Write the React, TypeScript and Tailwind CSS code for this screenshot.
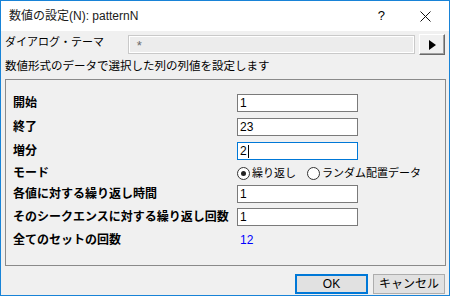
import React from 'react';

// Dialog: 数値の設定 (pattern N)
const font = "font-['Liberation_Sans','Noto_Sans_CJK_JP',sans-serif]";

function TextBox({ value, focused = false }: { value: string; focused?: boolean }) {
  return (
    <div
      className={`w-[121px] h-[18px] bg-white border flex items-center pl-[2px] text-[12px] leading-[16px] text-black ${
        focused ? 'border-[#0078d7]' : 'border-[#7a7a7a]'
      }`}
    >
      <span>{value}</span>
      {focused && <span className="w-px h-[13px] bg-black ml-[1px]" />}
    </div>
  );
}

function Radio({ label, checked }: { label: string; checked?: boolean }) {
  return (
    <div className="flex items-center gap-[2px]">
      <span className="w-[13px] h-[13px] rounded-full border border-[#333] bg-white flex items-center justify-center">
        {checked && <span className="w-[5px] h-[5px] rounded-full bg-[#222]" />}
      </span>
      <span className="text-[11px] leading-[16px] text-black">{label}</span>
    </div>
  );
}

const rows: { label: string; h: string; content: React.ReactNode }[] = [
  { label: '開始', h: 'h-[24px]', content: <TextBox value="1" /> },
  { label: '終了', h: 'h-[24px]', content: <TextBox value="23" /> },
  { label: '増分', h: 'h-[24px]', content: <TextBox value="2" focused /> },
  {
    label: 'モード',
    h: 'h-[20px]',
    content: (
      <div className="flex items-center gap-[11px]">
        <Radio label="繰り返し" checked />
        <Radio label="ランダム配置データ" />
      </div>
    ),
  },
  { label: '各値に対する繰り返し時間', h: 'h-[22px]', content: <TextBox value="1" /> },
  { label: 'そのシークエンスに対する繰り返し回数', h: 'h-[24px]', content: <TextBox value="1" /> },
  {
    label: '全てのセットの回数',
    h: 'h-[22px]',
    content: <span className="pl-[3px] text-[12px] leading-[16px] text-[#0000ff]">12</span>,
  },
];

export default function App() {
  return (
    <div className={`w-[450px] h-[296px] border border-[#1883d7] flex flex-col ${font} text-black`}>
      {/* Title bar */}
      <div className="h-[30px] bg-white flex items-center pl-[8px] shrink-0">
        <span className="text-[12px] leading-[16px] text-[#1a1a1a]">数値の設定(N): patternN</span>
        <span className="ml-auto text-[13px] leading-[16px] mr-[35px]">?</span>
        <svg width="11" height="11" viewBox="0 0 11 11" className="mr-[18px]">
          <path d="M0.5 0.5 L10.5 10.5 M10.5 0.5 L0.5 10.5" stroke="#111" strokeWidth="1" />
        </svg>
      </div>

      {/* Body */}
      <div className="flex-1 bg-[#f0f0f0] px-[4px] flex flex-col">
        <div className="flex items-start mt-[3px]">
          <span className="w-[123px] text-[11px] leading-[16px]">ダイアログ・テーマ</span>
          <div className="mt-[1px] w-[288px] h-[19px] border border-[#c9c9c9] p-px bg-white">
            <div className="h-full bg-[#ececec] pl-[7px] text-[13px] leading-[17px] text-[#6a6a6a]">*</div>
          </div>
          <div className="ml-[4px] w-[26px] h-[21px] bg-[#f0f0f0] border border-t-white border-l-white border-r-[#696969] border-b-[#696969] shadow-[inset_-1px_-1px_0_#a0a0a0] flex items-center justify-center">
            <svg width="8" height="10" viewBox="0 0 8 10">
              <path d="M1 0 L8 5 L1 10 Z" fill="#000" />
            </svg>
          </div>
        </div>

        <div className="mt-[3px] text-[11.5px] leading-[16px]">数値形式のデータで選択した列の列値を設定します</div>

        {/* Group box */}
        <div className="mt-[5px] w-[441px] h-[187px] border border-[#8a8a8a] pt-[11px] pl-[7px]">
          {rows.map((r) => (
            <div key={r.label} className={`grid grid-cols-[224px_1fr] items-center ${r.h}`}>
              <span className="text-[12px] leading-[16px] font-bold whitespace-nowrap">{r.label}</span>
              <div className="flex items-center">{r.content}</div>
            </div>
          ))}
        </div>

        {/* Buttons */}
        <div className="mt-[8px] flex justify-end gap-[5px]">
          <button className="w-[73px] h-[20px] bg-[#e1e1e1] border-2 border-[#0078d7] text-[12px] leading-[14px]">
            OK
          </button>
          <button className="w-[72px] h-[20px] bg-[#e1e1e1] border border-[#adadad] text-[12px] leading-[14px]">
            キャンセル
          </button>
        </div>
      </div>
    </div>
  );
}
